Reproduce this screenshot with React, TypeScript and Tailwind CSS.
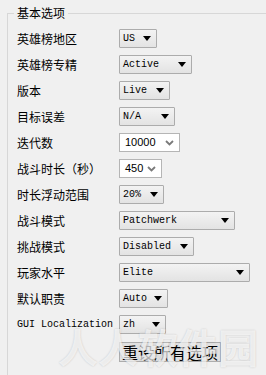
import React from "react";

type Row = {
  label: string;
  value: string;
  w: string;
  edit?: boolean;
  mono?: boolean;
};

const rows: Row[] = [
  { label: "英雄榜地区", value: "US", w: "w-[38px]" },
  { label: "英雄榜专精", value: "Active", w: "w-[73px]" },
  { label: "版本", value: "Live", w: "w-[51px]" },
  { label: "目标误差", value: "N/A", w: "w-[56px]" },
  { label: "迭代数", value: "10000", w: "w-[61px]", edit: true },
  { label: "战斗时长（秒）", value: "450", w: "w-[43px]", edit: true },
  { label: "时长浮动范围", value: "20%", w: "w-[45px]" },
  { label: "战斗模式", value: "Patchwerk", w: "w-[116px]" },
  { label: "挑战模式", value: "Disabled", w: "w-[75px]" },
  { label: "玩家水平", value: "Elite", w: "w-[131px]" },
  { label: "默认职责", value: "Auto", w: "w-[49px]" },
  { label: "GUI Localization", value: "zh", w: "w-[47px]", mono: true },
];

const cjk = "font-['Noto_Sans_CJK_SC',sans-serif]";
const mono = "font-['Liberation_Mono','DejaVu_Sans_Mono',monospace]";

function Triangle() {
  return (
    <svg width="8" height="5" viewBox="0 0 8 5" className="shrink-0">
      <path d="M0 0h8L4 5z" fill="#000" />
    </svg>
  );
}

function Chevron() {
  return (
    <svg width="9" height="6" viewBox="0 0 9 6" className="shrink-0">
      <path d="M1 1l3.5 3.5L8 1" stroke="#7a7a7a" strokeWidth="1.8" fill="none" />
    </svg>
  );
}

function Combo({ row }: { row: Row }) {
  if (row.edit) {
    return (
      <div
        className={`${row.w} h-[19px] flex items-center justify-between border border-[#b5b5b5] bg-white pl-[5px] pr-[5px] text-[11px] text-black font-['Liberation_Sans',sans-serif]`}
      >
        <span>{row.value}</span>
        <Chevron />
      </div>
    );
  }
  return (
    <div
      className={`${row.w} h-[19px] flex items-center justify-between border border-[#acacac] rounded-[1px] bg-gradient-to-b from-[#f3f3f3] to-[#e3e3e3] pl-[3px] pr-[5px] text-[10px] text-black ${mono}`}
    >
      <span>{row.value}</span>
      <Triangle />
    </div>
  );
}

export default function App() {
  return (
    <div className="relative w-[266px] h-[375px] overflow-hidden bg-[#f0f0f0] pt-[5px] pl-[7px]">
      <fieldset className="h-[420px] border-t border-l border-[#d7d7d7] pl-[9px] pt-[8px]">
        <legend className={`-ml-[3px] px-[3px] text-[12px] leading-[16px] text-black ${cjk}`}>
          基本选项
        </legend>

        <div className="flex flex-col gap-[7px]">
          {rows.map((row) => (
            <div key={row.label} className="flex items-center h-[19px]">
              <span
                className={`w-[102px] shrink-0 text-black ${
                  row.mono ? `text-[10px] ${mono}` : `text-[12px] ${cjk}`
                }`}
              >
                {row.label}
              </span>
              <Combo row={row} />
            </div>
          ))}

          <div className="flex mt-[1px]">
            <button
              className={`ml-[102px] w-[102px] h-[20px] flex items-center justify-center border border-[#adadad] bg-[#e1e1e1] text-[16px] leading-none text-black ${cjk}`}
            >
              重设所有选项
            </button>
          </div>
        </div>
      </fieldset>

      {/* watermark */}
      <div
        className={`pointer-events-none absolute left-[58px] top-[326px] text-[40px] font-bold leading-none whitespace-nowrap text-white/70 [text-shadow:0_0_2px_rgba(0,0,0,0.18)] ${cjk}`}
      >
        人人软件园
      </div>
    </div>
  );
}
